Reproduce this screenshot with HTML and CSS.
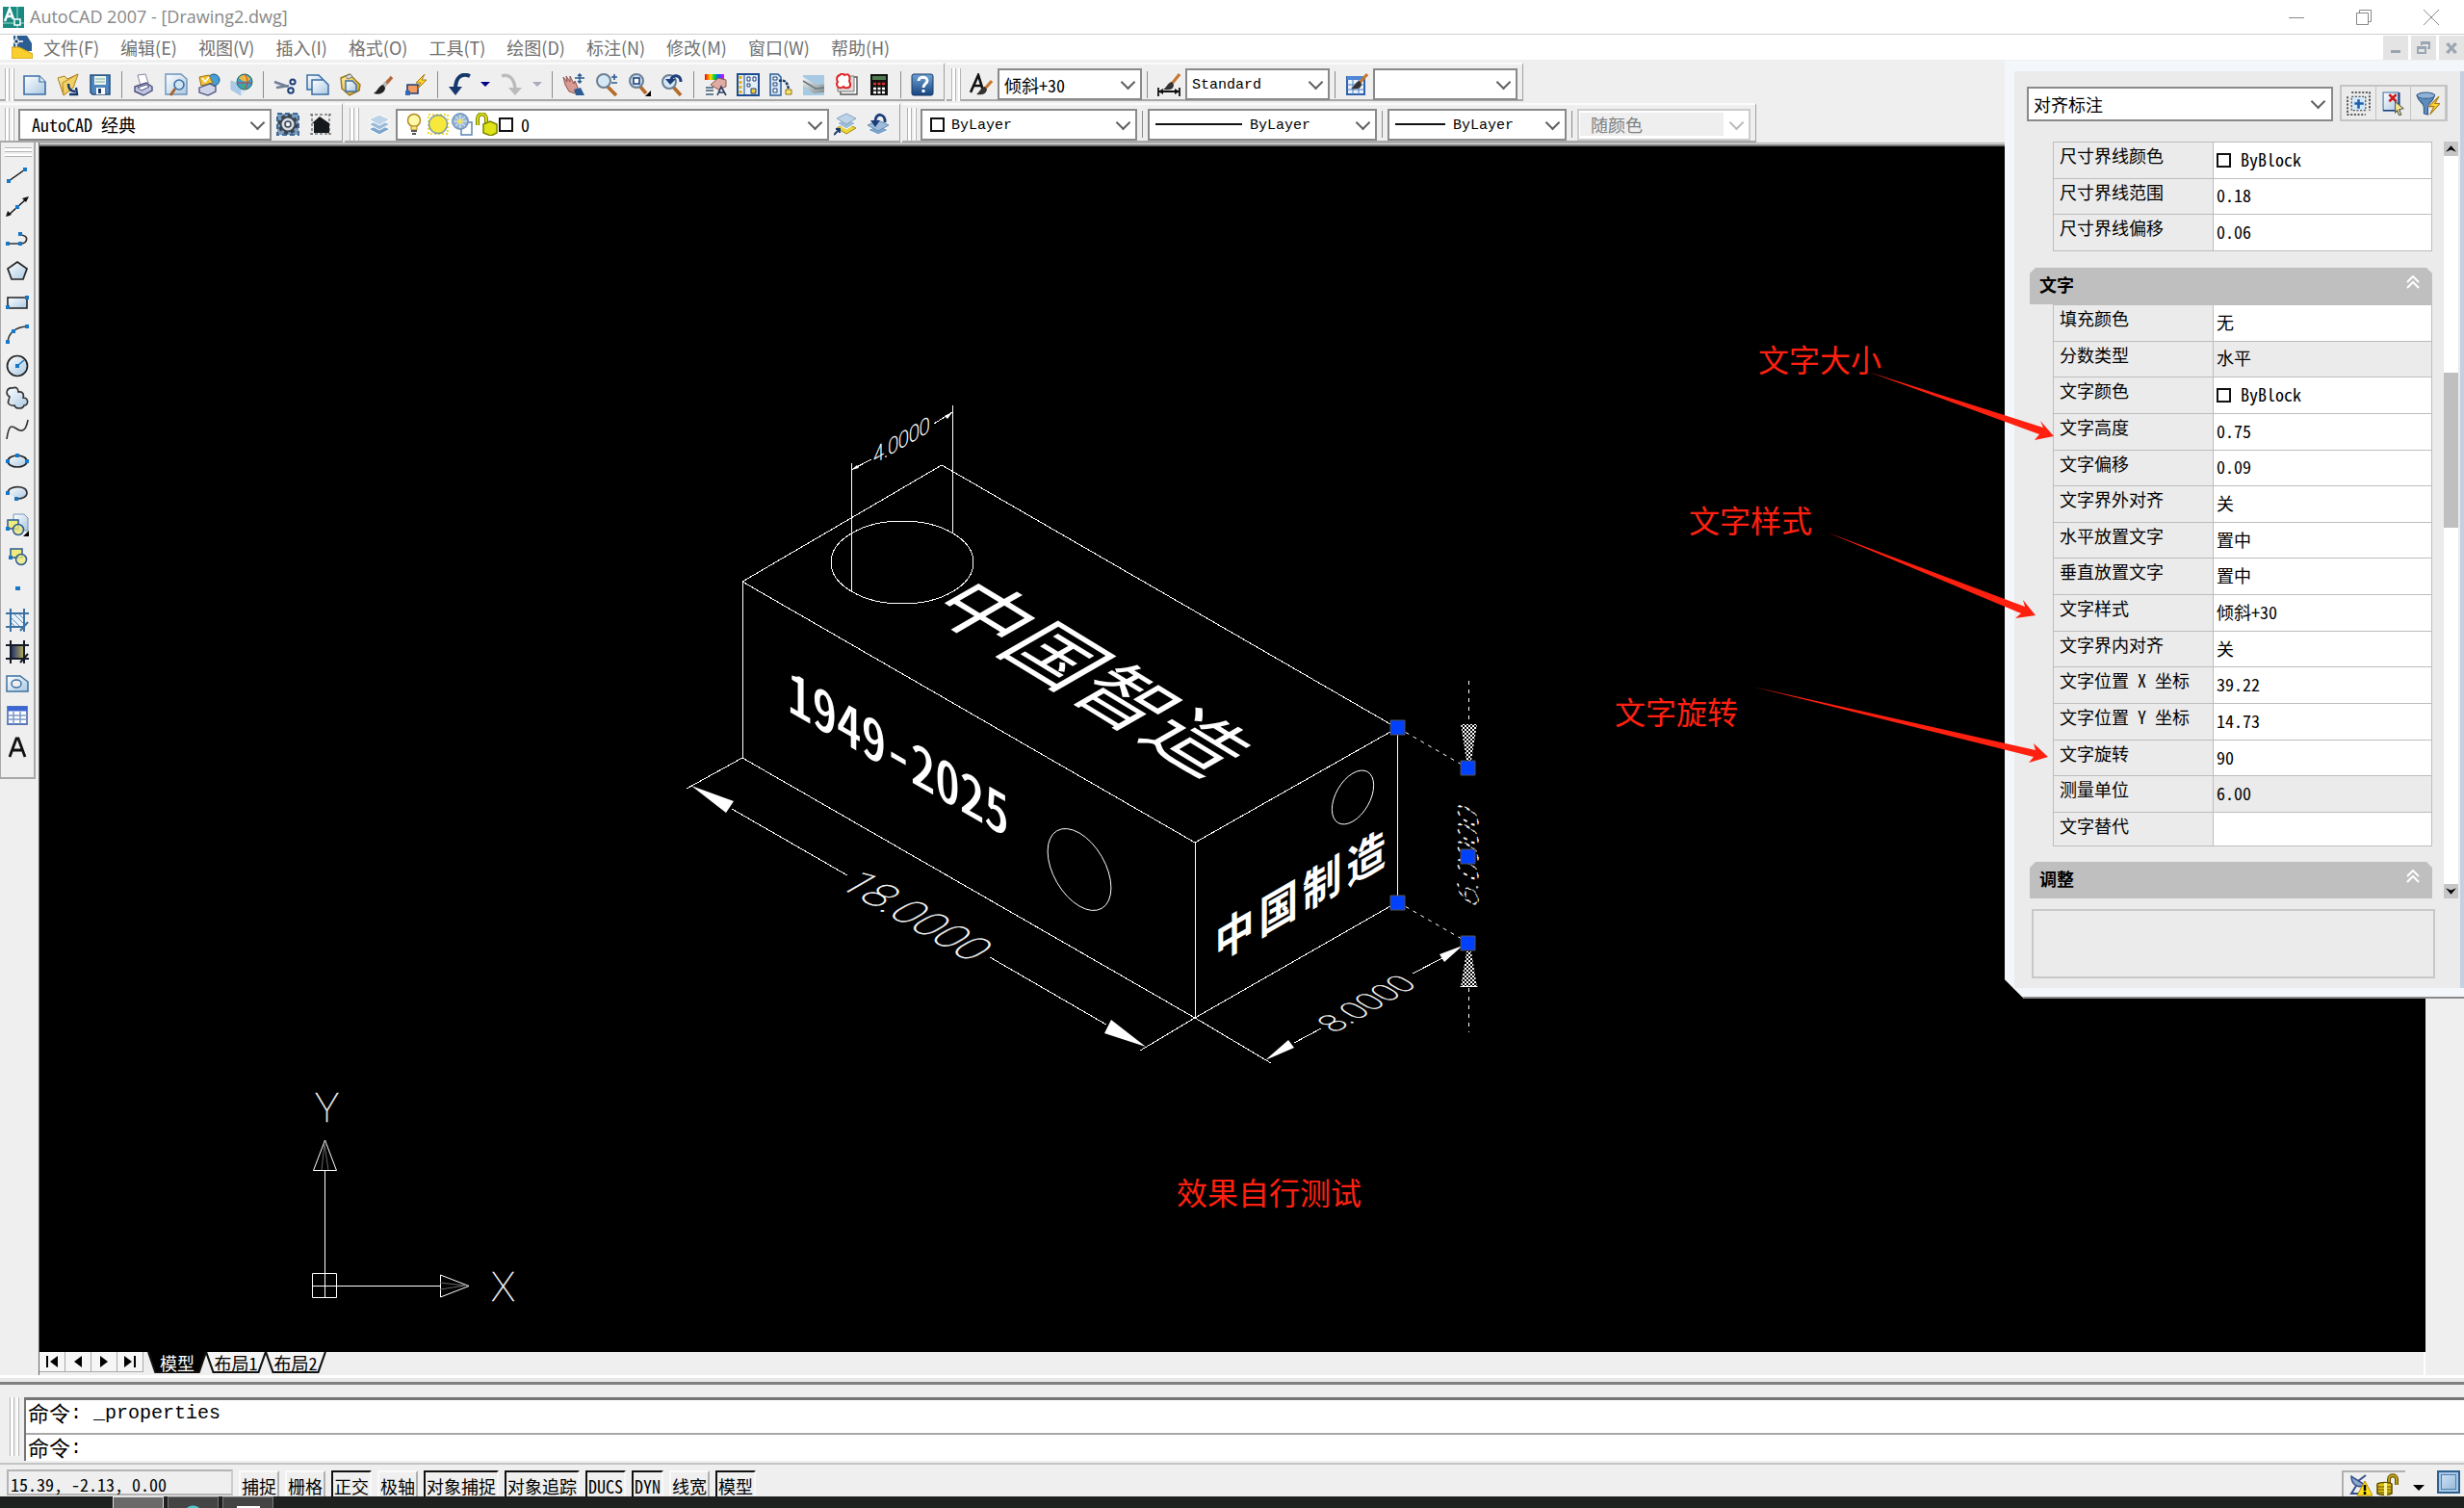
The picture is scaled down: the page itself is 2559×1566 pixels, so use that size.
FILE: index.html
```html
<!DOCTYPE html>
<html lang="zh-CN">
<head>
<meta charset="utf-8">
<title>AutoCAD 2007 - [Drawing2.dwg]</title>
<link rel="stylesheet" href="styles.css">
</head>
<body>
<svg class="defs" aria-hidden="true">
  <defs>
    <linearGradient id="paper" x1="0" y1="0" x2="1" y2="1"><stop offset="0" stop-color="#fff"/><stop offset="1" stop-color="#a9c8e2"/></linearGradient>
    <linearGradient id="gold" x1="0" y1="0" x2="1" y2="1"><stop offset="0" stop-color="#fdf3a8"/><stop offset="1" stop-color="#d09a1c"/></linearGradient>
    <linearGradient id="steel" x1="0" y1="0" x2="0" y2="1"><stop offset="0" stop-color="#6fa2d4"/><stop offset="1" stop-color="#17457f"/></linearGradient>
    <linearGradient id="rainbow"><stop offset="0" stop-color="#f00"/><stop offset=".3" stop-color="#fd0"/><stop offset=".5" stop-color="#0c3"/><stop offset=".7" stop-color="#06f"/><stop offset="1" stop-color="#e0f"/></linearGradient>
    <linearGradient id="dusk"><stop offset="0" stop-color="#1b2a66"/><stop offset="1" stop-color="#b9b060"/></linearGradient>
    <linearGradient id="pipe" x1="0" y1="0" x2="1" y2="1"><stop offset="0" stop-color="#f4f6f6"/><stop offset="1" stop-color="#7f8c90"/></linearGradient>
    <pattern id="mesh" width="4" height="4" patternUnits="userSpaceOnUse"><path d="M0 0L4 4M4 0L0 4" stroke="#fff" stroke-width="1"/></pattern>
  </defs>
  <symbol id="i-new" viewBox="0 0 24 24"><path d="M1 3h16l6 6v13H1z" fill="url(#paper)" stroke="#3a6ea5" stroke-width="1.6"/><path d="M17 3v6h6" fill="#dbe9f5" stroke="#3a6ea5" stroke-width="1.2"/></symbol>
  <symbol id="i-open" viewBox="0 0 24 24"><path d="M2 5l7-2 3 3 11-5-5 14-10 8z" fill="url(#gold)" stroke="#a87b1a"/><path d="M7 10l16-9-5 14-10 8z" fill="#f0d066" stroke="#b98c25"/><path d="M13 11c0 6 3 8 7 8M14 22l8 0-1-7" fill="none" stroke="#17386b" stroke-width="2.4"/></symbol>
  <symbol id="i-save" viewBox="0 0 24 24"><path d="M2 2h20v20H4l-2-2z" fill="#4d86bd" stroke="#24507f" stroke-width="1.5"/><path d="M6 3h12v9H6z" fill="#eaf5ee"/><path d="M7 6h10M7 9h10" stroke="#7fae9b"/><path d="M8 15h9v7H8z" fill="#fff"/><path d="M10 16h3v5h-3z" fill="#1a3a66"/></symbol>
  <symbol id="i-print" viewBox="0 0 24 24"><path d="M6 2l8-1 3 9-8 3z" fill="#fff" stroke="#8286a6"/><path d="M3 14l12-4 6 4v4l-9 5-9-4z" fill="#bfc4e0" stroke="#4b4f7c" stroke-width="1.4"/><path d="M6 15l9-3 3 2-8 4z" fill="#fff" stroke="#4b4f7c"/></symbol>
  <symbol id="i-preview" viewBox="0 0 24 24"><path d="M1 1h16l6 5v16H1z" fill="url(#paper)" stroke="#6d93bb" stroke-width="1.4"/><circle cx="15" cy="12" r="5" fill="#cde4f3" stroke="#3f6ea3" stroke-width="1.6"/><path d="M11 16l-5 7" stroke="#a8642c" stroke-width="3"/></symbol>
  <symbol id="i-publish" viewBox="0 0 24 24"><circle cx="17" cy="7" r="6" fill="#44a0d4" stroke="#19507f"/><path d="M2 4l10-2 4 8-12 3z" fill="#f3c331" stroke="#9b6f0d"/><path d="M5 5l3 4 4-5" stroke="#fff" stroke-width="1.5" fill="none"/><path d="M2 15l11-4 6 3v5l-8 4-9-3z" fill="#cfd3e8" stroke="#4b4f7c" stroke-width="1.3"/></symbol>
  <symbol id="i-web" viewBox="0 0 24 24"><path d="M1 8l10 4v11L1 17z" fill="#a9cbe9" stroke="#a9c2dd"/><path d="M11 12l9 3-9 8z" fill="#d5e6f5"/><circle cx="15" cy="9" r="8" fill="#3ba0cf" stroke="#2b6a55"/><path d="M9 5c4-4 8-4 12 1l-3 3-5-1z" fill="#f1b83a"/><path d="M8 10h14M15 1c4 5 4 11 0 16" stroke="#c8402a" fill="none"/><path d="M11 11l5 2-1 4z" fill="#49b04c"/></symbol>
  <symbol id="i-cut" viewBox="0 0 24 24"><path d="M1 9l14 5M3 15l13-2" stroke="#6f7f96" stroke-width="2.4"/><circle cx="20" cy="9" r="2.6" fill="none" stroke="#1d3f7b" stroke-width="2"/><circle cx="18" cy="18" r="2.8" fill="none" stroke="#1d3f7b" stroke-width="2"/></symbol>
  <symbol id="i-copy" viewBox="0 0 24 24"><path d="M1 2h12l4 4v11H1z" fill="url(#paper)" stroke="#3a6ea5" stroke-width="1.5"/><path d="M6 7h12l5 5v10H6z" fill="url(#paper)" stroke="#3a6ea5" stroke-width="1.5"/></symbol>
  <symbol id="i-paste" viewBox="0 0 24 24"><path d="M2 5l9-4 11 11-1 6-10 5-8-7z" fill="url(#gold)" stroke="#9c7419" stroke-width="1.4"/><path d="M7 8h7l4 4v7H7z" fill="url(#paper)" stroke="#3a6ea5" stroke-width="1.4"/><path d="M7 3l5-2 2 3-5 2z" fill="#ddd" stroke="#777"/></symbol>
  <symbol id="i-brush" viewBox="0 0 24 24"><path d="M21 4l-8 9" stroke="#b5683a" stroke-width="3.4"/><path d="M15 10l-3 4" stroke="#bbb" stroke-width="4"/><path d="M12 12c-5 1-5 6-10 9 7 2 12-1 12-6z" fill="#222"/></symbol>
  <symbol id="i-block" viewBox="0 0 24 24"><path d="M3 12h11v9H3z" fill="#f49a63" stroke="#1d3f7b" stroke-width="1.6"/><path d="M1 18h5v5H1z" fill="#2f6cb5"/><path d="M21 1l-9 9 5 0-4 7 10-10-5 0z" fill="#ffd52e" stroke="#a97a12"/></symbol>
  <symbol id="i-undo" viewBox="0 0 24 24"><path d="M23 3C14 -1 8 5 8 16" fill="none" stroke="#17386b" stroke-width="4"/><path d="M1 14l14 0-7 9z" fill="#17386b"/></symbol>
  <symbol id="i-redo" viewBox="0 0 24 24"><path d="M2 3c8-3 13 3 14 13" fill="none" stroke="#bbb" stroke-width="3.4"/><path d="M9 15h14l-7 8z" fill="#bbb"/></symbol>
  <symbol id="i-pan" viewBox="0 0 24 24"><path d="M1 4l4 5-1-6 4 6V3l4 8 1-3 3 7-3 6-6-2-4-7z" fill="#d99a92" stroke="#8b5550"/><path d="M12 17l7-2 4 8h-9z" fill="#2a5b93"/><path d="M18 1v9M13 5h10M16 3l2-2 2 2M16 8l2 2 2-2" stroke="#2a5b93" stroke-width="1.5" fill="none"/></symbol>
  <symbol id="i-zoom" viewBox="0 0 24 24"><path d="M13 14l9 9" stroke="#b56a28" stroke-width="3.6"/><circle cx="9" cy="8" r="7" fill="#d5e8f6" stroke="#6c7f92" stroke-width="2"/><path d="M17 4h6M20 1v6M17 10h6" stroke="#2a5b93" stroke-width="1.6"/></symbol>
  <symbol id="i-zoomwin" viewBox="0 0 24 24"><path d="M13 14l6 7" stroke="#b56a28" stroke-width="3.6"/><circle cx="9" cy="8" r="7" fill="#c5dcf0" stroke="#6c7f92" stroke-width="2"/><path d="M6 5h6v6H6z" fill="#fff" stroke="#1d3f7b" stroke-width="1.6"/><path d="M24 18v6h-6z" fill="#000"/></symbol>
  <symbol id="i-zoomprev" viewBox="0 0 24 24"><path d="M13 14l8 9" stroke="#b56a28" stroke-width="3.6"/><circle cx="9" cy="9" r="7" fill="#d5e8f6" stroke="#6c7f92" stroke-width="2"/><path d="M21 9c0-8-9-8-10-2" fill="none" stroke="#1d3f7b" stroke-width="3"/><path d="M5 6h11l-6 6z" fill="#1d3f7b"/></symbol>
  <symbol id="i-props" viewBox="0 0 24 24"><path d="M1 1h20v6H1z" fill="url(#rainbow)"/><path d="M7 12l8-7 8 2v7l-8 3z" fill="#e0aba0" stroke="#8b5550"/><path d="M2 15h8M2 18h8M2 22h8" stroke="#3d5b77" stroke-width="1.4"/><path d="M14 23l4-9 5 9M16 20h5" fill="none" stroke="#2d3d5e" stroke-width="1.6"/></symbol>
  <symbol id="i-dc" viewBox="0 0 24 24"><path d="M1 1h22v22H1z" fill="#e5effa" stroke="#1f4d8f" stroke-width="2"/><path d="M4 3v18" stroke="#e0b21c" stroke-width="3" stroke-dasharray="3 2"/><path d="M8 2v20" stroke="#1f4d8f"/><path d="M11 4h3v4h-3zM17 4h3v4h-3zM11 11h3v3h-3z" fill="#fff" stroke="#1f3f70"/><path d="M15 16h5v5h-5z" fill="#f3cf3b" stroke="#1f3f70"/></symbol>
  <symbol id="i-tp" viewBox="0 0 24 24"><path d="M1 1h8l3 3v19H1z" fill="#dbe8f6" stroke="#2d5f9a" stroke-width="1.5"/><path d="M4 4h4v3H4zM4 10h4v3H4zM4 16h4v4H4z" fill="#fff" stroke="#1f3f70"/><path d="M10 8c6-2 9 2 10 9" fill="none" stroke="#17386b" stroke-width="2.4" stroke-dasharray="3 1"/><path d="M17 17h6v5h-6z" fill="#fbe56a" stroke="#8d7315"/></symbol>
  <symbol id="i-sheet" viewBox="0 0 24 24"><path d="M1 2h22v21H1z" fill="#a7cae3"/><path d="M1 4l14 8 8-1v9l-11 1L1 13z" fill="url(#pipe)"/><path d="M1 8l13 8 9-1" stroke="#6a7579" fill="none" stroke-width="1.5"/></symbol>
  <symbol id="i-markup" viewBox="0 0 24 24"><path d="M6 4h17v18H6z" fill="#fff" stroke="#555" stroke-width="1.4"/><path d="M3 3h17v16H3z" fill="#ddd" stroke="#777"/><path d="M5 2c3-3 5 0 5 0s4-2 5 1 0 5 0 5 3 6-1 7-5-1-5-1-4 3-6 0 0-5 0-5-3-5 2-7z" fill="#fff" stroke="#e02525" stroke-width="2"/></symbol>
  <symbol id="i-calc" viewBox="0 0 24 24"><path d="M3 1h18v22H3z" fill="#111"/><path d="M5 3h14v4H5z" fill="#4d7a4d"/><path d="M6 11h12" stroke="#e03030" stroke-width="2.4" stroke-dasharray="3 1.5"/><path d="M6 16h12M6 20h12" stroke="#fff" stroke-width="2.4" stroke-dasharray="3 1.5"/></symbol>
  <symbol id="i-help" viewBox="0 0 24 24"><rect x="1" y="1" width="22" height="22" rx="2" fill="url(#steel)" stroke="#17386b"/><path d="M8 8c0-5 9-5 9 0 0 3-4 3-4 7" fill="none" stroke="#fff" stroke-width="3"/><path d="M11.500 17h3v3h-3z" fill="#fff"/></symbol>
  <symbol id="i-tstyle" viewBox="0 0 24 24"><path d="M1 20L9 2l5 16M4 13h8" fill="none" stroke="#111" stroke-width="2.600"/><path d="M23 8l-7 8" stroke="#c8752e" stroke-width="3"/><path d="M16 14c-4 0-5 5-9 8 5 1 10 0 11-5z" fill="#333"/></symbol>
  <symbol id="i-dstyle" viewBox="0 0 24 24"><path d="M23 1l-8 10" stroke="#c8752e" stroke-width="3"/><path d="M15 9c-5 1-5 6-9 8 6 1 11 0 11-5z" fill="#333"/><path d="M1 15v9M23 15v9M1 19h22" stroke="#111" stroke-width="1.800"/><path d="M1 19l5-3v6zM23 19l-5-3v6z" fill="#111"/></symbol>
  <symbol id="i-tabstyle" viewBox="0 0 24 24"><path d="M2 4h18v18H2z" fill="#e9f1fb" stroke="#2f62ac" stroke-width="2"/><path d="M2 5h18" stroke="#4f86d6" stroke-width="4"/><path d="M8 7v15M14 7v15M2 12h18M2 17h18" stroke="#4f7fc0"/><path d="M23 1l-8 9" stroke="#c8752e" stroke-width="3"/><path d="M15 8c-5 1-5 6-9 8 6 1 11 0 11-5z" fill="#333"/></symbol>
  <symbol id="i-gear" viewBox="0 0 24 24"><path d="M1 1h22v22H1z" fill="#7d9dbd" stroke="#3b6a9a" stroke-width="2" stroke-dasharray="5 3"/><circle cx="12" cy="12" r="9" fill="none" stroke="#3a4350" stroke-width="3" stroke-dasharray="4 3"/><circle cx="12" cy="12" r="7.500" fill="#d7dde4" stroke="#3a4350" stroke-width="2"/><circle cx="12" cy="12" r="3" fill="#f0f4f8" stroke="#3a4350" stroke-width="1.500"/></symbol>
  <symbol id="i-home" viewBox="0 0 24 24"><path d="M1 2h22M1 22h22M3 1v22M21 1v22" stroke="#777" stroke-width="1.500" stroke-dasharray="3 2"/><path d="M3 11l8-7 10 7v10H5V11z" fill="#15181d"/></symbol>
  <symbol id="i-layers" viewBox="0 0 24 24"><path d="M1 17l11-5 11 5-11 6z" fill="#7fa6cc" stroke="#fff"/><path d="M1 12l11-5 11 5-11 6z" fill="#9dbcd9" stroke="#fff"/><path d="M1 7l11-5 11 5-11 6z" fill="#bcd3e8" stroke="#fff"/></symbol>
  <symbol id="i-laymatch" viewBox="0 0 24 24"><path d="M3 16l10-5 10 5-10 6z" fill="#ecd43b" stroke="#a48c12"/><path d="M3 11l10-5 10 5-10 6z" fill="#9dbcd9" stroke="#fff"/><path d="M3 6l10-5 10 5-10 6z" fill="#bcd3e8" stroke="#88a5c2"/><path d="M0 23l5-5M2 17h4v4" stroke="#17386b" stroke-width="1.800" fill="none"/></symbol>
  <symbol id="i-layprev" viewBox="0 0 24 24"><path d="M1 18l11-5 11 5-11 5z" fill="#7fa6cc" stroke="#fff"/><path d="M1 13l11-5 11 5-11 6z" fill="#9dbcd9" stroke="#6a8fb4"/><path d="M19 10c1-9-10-11-10-1" fill="none" stroke="#1d3f7b" stroke-width="3"/><path d="M4 8h10l-5 7z" fill="#1d3f7b"/></symbol>
  <symbol id="i-bulb" viewBox="0 0 24 24"><circle cx="12" cy="8" r="6.500" fill="#fff9a8" stroke="#b28a1e" stroke-width="1.500"/><path d="M9 14h6v4H9z" fill="#f6e37a" stroke="#b28a1e"/><path d="M9 19h6M10 22h4" stroke="#555" stroke-width="2"/></symbol>
  <symbol id="i-sun" viewBox="0 0 24 24"><path d="M2 2h20v20H2z" fill="none" stroke="#f0dc28" stroke-width="2" stroke-dasharray="2 2"/><circle cx="12" cy="12" r="9.500" fill="#f7e93c" stroke="#7c98a8" stroke-width="1.500"/></symbol>
  <symbol id="i-freeze" viewBox="0 0 24 24"><path d="M11 10h11v13H11z" fill="#fff" stroke="#5b86b5" stroke-width="1.500"/><circle cx="10" cy="9" r="8" fill="#9ab9d6" stroke="#7b9cbf" stroke-width="2"/><path d="M10 2v14M3 9h14M5 4l10 10M15 4L5 14" stroke="#e8eff6"/><circle cx="10" cy="9" r="2.500" fill="#f3e25a"/></symbol>
  <symbol id="i-unlock" viewBox="0 0 24 24"><path d="M3 13V6c0-6 9-6 9 0v6" fill="none" stroke="#7c8200" stroke-width="4"/><path d="M3 13V6c0-6 9-6 9 0v6" fill="none" stroke="#d8e014" stroke-width="2"/><path d="M9 12l7-3 7 3v9l-6 3-8-3z" fill="#dfe317" stroke="#7c8200" stroke-width="1.500"/></symbol>
  <symbol id="i-line" viewBox="0 0 24 24"><path d="M3 18L20 6" stroke="#111" stroke-width="1.500"/><path d="M1 16h4v4H1zM18 4h4v4h-4z" fill="#1577c6"/></symbol>
  <symbol id="i-xline" viewBox="0 0 24 24"><path d="M2 21L22 3" stroke="#111" stroke-width="1.500"/><path d="M0 22l2-6 4 4zM24 1l-7 2 4 4z" fill="#111"/><path d="M10 10h4v4h-4z" fill="#1577c6"/></symbol>
  <symbol id="i-pline" viewBox="0 0 24 24"><path d="M2 17h14c7-1 8-8 0-9" fill="none" stroke="#333" stroke-width="1.700"/><path d="M0 15h4v4H0zM13 15h4v4h-4zM13 5h4v4h-4z" fill="#1577c6"/></symbol>
  <symbol id="i-poly" viewBox="0 0 24 24"><path d="M12 3l10 7-4 11H6L2 10z" fill="url(#paper)" stroke="#222" stroke-width="1.700"/></symbol>
  <symbol id="i-rect" viewBox="0 0 24 24"><path d="M2 7h20v11H2z" fill="url(#paper)" stroke="#222" stroke-width="1.600"/><path d="M0 15h4v4H0zM20 5h4v4h-4z" fill="#1577c6"/></symbol>
  <symbol id="i-arc" viewBox="0 0 24 24"><path d="M2 20C3 11 9 5 22 4" fill="none" stroke="#333" stroke-width="1.600"/><path d="M0 18h4v4H0zM6 7h4v4H6zM20 2h4v4h-4z" fill="#1577c6"/></symbol>
  <symbol id="i-circle" viewBox="0 0 24 24"><circle cx="12" cy="12" r="10.500" fill="url(#paper)" stroke="#222" stroke-width="1.700"/><path d="M12 12l7-6" stroke="#1577c6" stroke-width="1.500"/><path d="M10 10h4v4h-4z" fill="#1577c6"/></symbol>
  <symbol id="i-cloud" viewBox="0 0 24 24"><path d="M4 11c-5-3-3-10 3-9 4-2 6 1 6 4 5-1 6 3 5 6 6 0 6 8 1 8-1 4-9 4-10 0-4 1-8-2-6-5 0-2 1-3 1-4z" fill="url(#paper)" stroke="#333" stroke-width="1.600"/></symbol>
  <symbol id="i-spline" viewBox="0 0 24 24"><path d="M1 22C4 0 9 12 15 13c5 1 7-5 8-11" fill="none" stroke="#333" stroke-width="1.600"/></symbol>
  <symbol id="i-ellipse" viewBox="0 0 24 24"><ellipse cx="12" cy="12" rx="10" ry="6" fill="url(#paper)" stroke="#222" stroke-width="1.700"/><path d="M0 10h4v4H0zM20 10h4v4h-4zM10 4h4v4h-4z" fill="#1577c6"/></symbol>
  <symbol id="i-earc" viewBox="0 0 24 24"><path d="M2 12c0-8 20-9 20 0 0 4-5 6-10 6" fill="url(#paper)" stroke="#333" stroke-width="1.700"/><path d="M0 10h4v4H0zM9 16h4v4H9z" fill="#1577c6"/></symbol>
  <symbol id="i-insert" viewBox="0 0 24 24"><path d="M8 1h11l4 4v13H8z" fill="url(#paper)" stroke="#7795b5"/><path d="M2 7h11v9H2z" fill="#f0eb7d" stroke="#2a5b93" stroke-width="1.500"/><circle cx="13" cy="17" r="5.500" fill="#f0eb7d" fill-opacity=".8" stroke="#2a5b93" stroke-width="1.500"/><path d="M0 14h4v4H0z" fill="#1577c6"/><path d="M24 18v6h-6z" fill="#000"/></symbol>
  <symbol id="i-mkblock" viewBox="0 0 24 24"><path d="M5 4h12v9H5z" fill="#f0eb7d" stroke="#2a5b93" stroke-width="1.500"/><circle cx="16" cy="15" r="5.500" fill="#f0eb7d" fill-opacity=".8" stroke="#2a5b93" stroke-width="1.500"/><path d="M3 11h4v4H3z" fill="#1577c6"/></symbol>
  <symbol id="i-point" viewBox="0 0 24 24"><path d="M10 10h5v4h-5z" fill="#1577c6"/></symbol>
  <symbol id="i-hatch" viewBox="0 0 24 24"><path d="M5 5h14v14H5z" fill="#e8f1f9"/><path d="M5 9l10 10M5 14l5 5M8 5l11 11M13 5l6 6" stroke="#5e8cb8"/><path d="M0 5h24M0 19h20M5 0v24M19 0v24M15 23l8-9" stroke="#3c71a3" stroke-width="2" fill="none"/></symbol>
  <symbol id="i-grad" viewBox="0 0 24 24"><path d="M5 5h14v14H5z" fill="url(#dusk)"/><path d="M0 5h24M0 19h24M5 0v24M19 0v24M15 23l8-9" stroke="#151a26" stroke-width="2" fill="none"/></symbol>
  <symbol id="i-region" viewBox="0 0 24 24"><path d="M1 4h14l8 6v10H1z" fill="url(#paper)" stroke="#3c71a3" stroke-width="1.500"/><ellipse cx="11" cy="12" rx="5" ry="4" fill="#efefef" stroke="#3c71a3" stroke-width="1.500"/></symbol>
  <symbol id="i-table" viewBox="0 0 24 24"><path d="M2 3h20v18H2z" fill="#fff" stroke="#5877b8" stroke-width="1.800"/><path d="M2 5h20" stroke="#3c66d4" stroke-width="5"/><path d="M8 8v13M15 8v13M2 12h20M2 16h20" stroke="#7d99c8" stroke-width="1.500"/></symbol>
  <symbol id="i-mtext" viewBox="0 0 24 24"><path d="M4 22L11 3h2l7 19M7 15h10" fill="none" stroke="#111" stroke-width="2.800"/></symbol>
</svg>

<header class="titlebar">
  <svg class="logo" viewBox="0 0 22 22"><path d="M0 0h22v22H0z" fill="#1a8a80"/><path d="M2 15L7 2l4 11M4 10h6" fill="none" stroke="#fff" stroke-width="2.500"/><path d="M15 0v22M0 17h22" stroke="#9fe0d4"/><path d="M12 13h6v6h-6z" fill="#1a8a80" stroke="#fff" stroke-width="1.500"/></svg>
  <h1>AutoCAD 2007 - [Drawing2.dwg]</h1>
  <div class="winctl">
    <button aria-label="最小化"><svg viewBox="0 0 16 16"><path d="M0 8.500h16"/></svg></button>
    <button aria-label="还原"><svg viewBox="0 0 16 16"><path d="M.5 3.500h12v12h-12zM3.500 3V.5h12v12H13"/></svg></button>
    <button aria-label="关闭"><svg viewBox="0 0 16 16"><path d="M0 0l16 16M16 0L0 16"/></svg></button>
  </div>
</header>

<nav class="menubar">
  <svg class="docicon" viewBox="0 0 22 24"><path d="M2 0h14l5 8v8H2z" fill="#2b5d92"/><path d="M5 0v12M0 6h12" stroke="#fff" stroke-width="1.500"/><path d="M3 4h4v4H3z" fill="#17386b" stroke="#fff"/><path d="M0 12l8 0 14 7v5H0z" fill="#f8cf2e" stroke="#c79a12"/></svg>
  <a href="#">文件(F)</a><a href="#">编辑(E)</a><a href="#">视图(V)</a><a href="#">插入(I)</a><a href="#">格式(O)</a><a href="#">工具(T)</a><a href="#">绘图(D)</a><a href="#">标注(N)</a><a href="#">修改(M)</a><a href="#">窗口(W)</a><a href="#">帮助(H)</a>
  <div class="docctl">
    <button aria-label="最小化图形"><svg viewBox="0 0 14 14"><path d="M2 9h10v3H2z"/></svg></button>
    <button aria-label="还原图形"><svg viewBox="0 0 14 14"><path d="M4 0h10v8h-3V6h1V3H6v1H4zM0 5h10v8H0zm2 3v3h6V8z" fill-rule="evenodd"/></svg></button>
    <button aria-label="关闭图形"><svg viewBox="0 0 14 14"><path d="M1 3l3-2 3 4 3-4 3 2-4 4 4 4-3 2-3-4-3 4-3-2 4-4z"/></svg></button>
  </div>
</nav>

<div class="dock">
  <div class="dockrow">
    <div class="bar">
      <i class="grip"></i>
      <button aria-label="新建"><svg><use href="#i-new"/></svg></button>
      <button aria-label="打开"><svg><use href="#i-open"/></svg></button>
      <button aria-label="保存"><svg><use href="#i-save"/></svg></button>
      <i class="sep"></i>
      <button aria-label="打印"><svg><use href="#i-print"/></svg></button>
      <button aria-label="打印预览"><svg><use href="#i-preview"/></svg></button>
      <button aria-label="发布"><svg><use href="#i-publish"/></svg></button>
      <button aria-label="三维 DWF"><svg><use href="#i-web"/></svg></button>
      <i class="sep"></i>
      <button aria-label="剪切"><svg><use href="#i-cut"/></svg></button>
      <button aria-label="复制"><svg><use href="#i-copy"/></svg></button>
      <button aria-label="粘贴"><svg><use href="#i-paste"/></svg></button>
      <button aria-label="特性匹配"><svg><use href="#i-brush"/></svg></button>
      <button aria-label="块编辑器"><svg><use href="#i-block"/></svg></button>
      <i class="sep"></i>
      <button aria-label="放弃"><svg><use href="#i-undo"/></svg></button>
      <button class="drop" aria-label="放弃列表"></button>
      <button aria-label="重做"><svg><use href="#i-redo"/></svg></button>
      <button class="drop off" aria-label="重做列表"></button>
      <i class="sep"></i>
      <button aria-label="平移"><svg><use href="#i-pan"/></svg></button>
      <button aria-label="实时缩放"><svg><use href="#i-zoom"/></svg></button>
      <button aria-label="窗口缩放"><svg><use href="#i-zoomwin"/></svg></button>
      <button aria-label="缩放上一个"><svg><use href="#i-zoomprev"/></svg></button>
      <i class="sep"></i>
      <button aria-label="特性"><svg><use href="#i-props"/></svg></button>
      <button aria-label="设计中心"><svg><use href="#i-dc"/></svg></button>
      <button aria-label="工具选项板"><svg><use href="#i-tp"/></svg></button>
      <button aria-label="图纸集管理器"><svg><use href="#i-sheet"/></svg></button>
      <button aria-label="标记集管理器"><svg><use href="#i-markup"/></svg></button>
      <button aria-label="快速计算器"><svg><use href="#i-calc"/></svg></button>
      <i class="sep"></i>
      <button aria-label="帮助"><svg><use href="#i-help"/></svg></button>
    </div>
    <div class="bar">
      <i class="grip"></i>
      <button aria-label="文字样式"><svg><use href="#i-tstyle"/></svg></button>
      <div class="combo w150"><select aria-label="文字样式控制"><option>倾斜+30</option></select></div>
      <i class="sep"></i>
      <button aria-label="标注样式"><svg><use href="#i-dstyle"/></svg></button>
      <div class="combo w150 mono"><select aria-label="标注样式控制"><option>Standard</option></select></div>
      <i class="sep"></i>
      <button aria-label="表格样式"><svg><use href="#i-tabstyle"/></svg></button>
      <div class="combo w150"><select aria-label="表格样式控制"><option></option></select></div>
    </div>
  </div>
  <div class="dockrow">
    <div class="bar">
      <i class="grip"></i>
      <div class="combo w263"><select aria-label="工作空间"><option>AutoCAD 经典</option></select></div>
      <button aria-label="工作空间设置"><svg><use href="#i-gear"/></svg></button>
      <button aria-label="我的工作空间"><svg><use href="#i-home"/></svg></button>
    </div>
    <div class="bar">
      <i class="grip"></i>
      <button aria-label="图层特性管理器"><svg><use href="#i-layers"/></svg></button>
      <div class="combo w450 layer">
        <svg><use href="#i-bulb"/></svg><svg><use href="#i-sun"/></svg><svg><use href="#i-freeze"/></svg><svg><use href="#i-unlock"/></svg><i class="swatch"></i>
        <select aria-label="图层"><option>0</option></select>
      </div>
      <button aria-label="将对象的图层置为当前"><svg><use href="#i-laymatch"/></svg></button>
      <button aria-label="上一个图层"><svg><use href="#i-layprev"/></svg></button>
    </div>
    <div class="bar">
      <i class="grip"></i>
      <div class="combo w225 mono"><i class="swatch"></i><select aria-label="颜色"><option>ByLayer</option></select></div>
      <i class="sep"></i>
      <div class="combo w238 mono"><i class="rule long"></i><select aria-label="线型"><option>ByLayer</option></select></div>
      <i class="sep"></i>
      <div class="combo w186 mono"><i class="rule"></i><select aria-label="线宽"><option>ByLayer</option></select></div>
      <i class="sep"></i>
      <div class="combo w180 disabled"><select aria-label="打印样式" disabled><option>随颜色</option></select></div>
    </div>
  </div>
</div>

<main class="work">
  <aside class="drawdock">
    <div class="drawbar">
      <i class="hgrip"></i>
      <button aria-label="直线"><svg><use href="#i-line"/></svg></button>
      <button aria-label="构造线"><svg><use href="#i-xline"/></svg></button>
      <button aria-label="多段线"><svg><use href="#i-pline"/></svg></button>
      <button aria-label="正多边形"><svg><use href="#i-poly"/></svg></button>
      <button aria-label="矩形"><svg><use href="#i-rect"/></svg></button>
      <button aria-label="圆弧"><svg><use href="#i-arc"/></svg></button>
      <button aria-label="圆"><svg><use href="#i-circle"/></svg></button>
      <button aria-label="修订云线"><svg><use href="#i-cloud"/></svg></button>
      <button aria-label="样条曲线"><svg><use href="#i-spline"/></svg></button>
      <button aria-label="椭圆"><svg><use href="#i-ellipse"/></svg></button>
      <button aria-label="椭圆弧"><svg><use href="#i-earc"/></svg></button>
      <button aria-label="插入块"><svg><use href="#i-insert"/></svg></button>
      <button aria-label="创建块"><svg><use href="#i-mkblock"/></svg></button>
      <button aria-label="点"><svg><use href="#i-point"/></svg></button>
      <button aria-label="图案填充"><svg><use href="#i-hatch"/></svg></button>
      <button aria-label="渐变色"><svg><use href="#i-grad"/></svg></button>
      <button aria-label="面域"><svg><use href="#i-region"/></svg></button>
      <button aria-label="表格"><svg><use href="#i-table"/></svg></button>
      <button aria-label="多行文字"><svg><use href="#i-mtext"/></svg></button>
    </div>
  </aside>
  <section class="view">
    <div class="model">
      <svg class="drawing" role="img" aria-label="等轴测图">
        <g transform="translate(-41 -152)" fill="none" stroke="#fff">
          <g class="edges">
            <path d="M771 604L978 483L1451 756L1241 875zM771 604V787L1241 1057V875M1451 756V937L1241 1057"/>
            <ellipse cx="937" cy="584" rx="74" ry="43"/>
            <circle r="38" vector-effect="non-scaling-stroke" transform="matrix(.866 .5 0 1 1121 903)"/>
            <circle r="25" vector-effect="non-scaling-stroke" transform="matrix(.866 -.5 0 1 1405 828)"/>
            <path d="M884.500 481V614M989.500 421V554M884 488L905 477M970 440L989 428"/>
            <path d="M771 787L713 819M1241 1057L1184 1091M760 840L880 909M1028 994L1149 1064"/>
            <path d="M1241 1057L1320 1104M1344 1083L1372 1068M1467 1011L1498 995"/>
          </g>
          <g fill="#fff" stroke="none">
            <path d="M718 816L762 832L754 844zM1190 1087L1154 1059L1147 1073zM1314 1101L1338 1080L1344 1088zM1519 982L1495 991L1500 999z"/>
            <path d="M884 488l6-5 2 3zM989 428l-8 4 3 3z"/>
          </g>
          <g class="dashed">
            <path d="M1452 756L1525 798M1452 937L1525 979M1525.500 707V752M1525.500 1026V1072"/>
            <text class="dim" font-size="34" transform="matrix(0 -1 .866 .5 1535 944)">6.0000</text>
          </g>
          <path d="M1517 752h17l-6 38h-5zM1523 988h5l6 37h-17z" fill="url(#mesh)" stroke="none"/>
          <path d="M1516.500 1024.500h18"/>
          <g class="dim solid">
            <text font-size="23" transform="matrix(.866 -.5 0 1 907 482)">4.0000</text>
            <text font-size="46" transform="matrix(.866 .5 -.866 .5 868 919)">18.0000</text>
            <text font-size="34" transform="matrix(.866 -.5 .866 .5 1386 1073)">8.0000</text>
          </g>
          <g class="lettering">
            <text font-size="86" transform="matrix(.852 .52 -.866 .5 960 630)">中国智造</text>
            <text class="half" font-size="59" transform="matrix(.866 .5 0 1 818 738)">1949-2025</text>
            <text class="heavy" font-size="47" x="2 55 107 160" transform="matrix(.866 -.5 0 1 1260 1000)">中国制造</text>
          </g>
          <g class="grips">
            <path d="M1444 748h15v15h-15zM1517 790h15v15h-15zM1517 882h15v15h-15zM1444 930h15v15h-15zM1517 972h15v15h-15z"/>
          </g>
          <g class="ucs">
            <path d="M324.500 1322.500h25v25h-25zM337.500 1347V1215M325 1335.500H457M325.500 1215.500h24L337.500 1184zM457.500 1324v23L487 1335.500z"/>
            <path d="M334 1215l3-27 4 27M457 1332l26 3-26 4" stroke="#666"/>
            <text x="327" y="1165">Y</text><text x="510" y="1351">X</text>
          </g>
        </g>
      </svg>
    </div>
    <div class="tabs">
      <div class="tabnav">
        <button aria-label="第一个"><svg viewBox="0 0 14 14"><path d="M1 1h2v12H1zM13 1v12L5 7z"/></svg></button>
        <button aria-label="上一个"><svg viewBox="0 0 14 14"><path d="M11 1v12L3 7z"/></svg></button>
        <button aria-label="下一个"><svg viewBox="0 0 14 14"><path d="M3 1v12l8-6z"/></svg></button>
        <button aria-label="最后一个"><svg viewBox="0 0 14 14"><path d="M1 1v12l8-6zM11 1h2v12h-2z"/></svg></button>
      </div>
      <button class="tab current"><svg viewBox="0 0 60 22" preserveAspectRatio="none"><path d="M1 0l7 21h44l7-21"/></svg><span>模型</span></button>
      <button class="tab"><svg viewBox="0 0 60 22" preserveAspectRatio="none"><path d="M1 0l7 21h44l7-21"/></svg><span>布局1</span></button>
      <button class="tab"><svg viewBox="0 0 60 22" preserveAspectRatio="none"><path d="M1 0l7 21h44l7-21"/></svg><span>布局2</span></button>
    </div>
  </section>
</main>

<section class="command">
  <i class="grip"></i>
  <div class="console">
    <p><span>命令</span>: _properties</p>
    <label><span>命令</span>:<input type="text" aria-label="命令行"></label>
  </div>
</section>

<footer class="status">
  <output class="coords">15.39, -2.13, 0.00</output>
  <div class="toggles">
    <button>捕捉</button><button>栅格</button><button class="on">正交</button><button>极轴</button><button class="on">对象捕捉</button><button class="on">对象追踪</button><button class="on">DUCS</button><button class="on">DYN</button><button>线宽</button><button class="on">模型</button>
  </div>
  <div class="tray">
    <svg viewBox="0 0 24 24"><path d="M2 3c0 9 7 13 14 9z" fill="#8fa5d0" stroke="#33508d" stroke-width="1.500"/><path d="M9 8l8-6M7 13l-5 8h9" stroke="#33508d" stroke-width="2" fill="none"/><path d="M16 8l8 15H8z" fill="#ffe11a" stroke="#b78a00"/><path d="M16 12v6M16 19v3" stroke="#000" stroke-width="2.500"/></svg>
    <svg viewBox="0 0 24 24"><path d="M13 11V6c0-5 8-5 8 0v6" fill="none" stroke="#6b5700" stroke-width="4"/><path d="M13 11V6c0-5 8-5 8 0v6" fill="none" stroke="#d0b020" stroke-width="1.500"/><path d="M1 11c3-2 12-2 15 0v10c-3 2-12 2-15 0z" fill="#e4c513" stroke="#5b4a00" stroke-width="1.500"/><path d="M1 14h15M1 17h15M1 20h15" stroke="#5b4a00"/><path d="M8 10h3v13H8z" fill="#fff59a"/></svg>
  </div>
  <button class="drop" aria-label="状态栏菜单"></button>
  <button class="clean" aria-label="全屏显示"></button>
</footer>

<div class="taskbar">
  <i class="task active"></i><i class="task"></i><i class="task"></i>
</div>

<section class="palette" aria-label="特性">
  <div class="palhead">
    <div class="combo"><select aria-label="选择对象"><option>对齐标注</option></select></div>
    <div class="palbtns">
      <button aria-label="切换 PICKADD"><svg viewBox="0 0 24 24"><path d="M5 1h18v18M1 5v18h18" fill="none" stroke="#333" stroke-width="1.500" stroke-dasharray="2 1.500"/><path d="M5 5h14v14H5z" fill="#d4e8f8" stroke="#333" stroke-dasharray="2 1.500"/><path d="M12 8v9M8 12h9" stroke="#1d5fae" stroke-width="2.500"/></svg></button>
      <button aria-label="选择对象"><svg viewBox="0 0 24 24"><path d="M2 1h15v18H2z" fill="url(#paper)" stroke="#3a6ea5"/><path d="M2 19h16V1" fill="none" stroke="#1d3f7b" stroke-width="1.500"/><path d="M8 3l7 7M15 3l-7 7" stroke="#d01818" stroke-width="2.500"/><path d="M14 10l8 7-4 1 2 5-2 1-2-5-2 2z" fill="#f3e68a" stroke="#555"/></svg></button>
      <button aria-label="快速选择"><svg viewBox="0 0 24 24"><path d="M1 4c2 8 7 6 7 12v6l4 1v-7c0-6 6-5 6-12z" fill="#5d8bbb" stroke="#2b5687"/><ellipse cx="10" cy="4" rx="9" ry="3" fill="#8fb2d4" stroke="#2b5687"/><path d="M23 5l-10 10h5l-4 8 10-11h-5z" fill="#ffd52e" stroke="#a97a12"/></svg></button>
    </div>
  </div>
  <div class="palbody">
    <div class="groups">
      <table class="props first">
        <tr><th scope="row">尺寸界线颜色</th><td><i class="swatch"></i>ByBlock</td></tr>
        <tr><th scope="row">尺寸界线范围</th><td>0.18</td></tr>
        <tr><th scope="row">尺寸界线偏移</th><td>0.06</td></tr>
      </table>
      <h2>文字<svg viewBox="0 0 14 14"><path d="M1 7l6-6 6 6M1 13l6-6 6 6"/></svg></h2>
      <table class="props second">
        <tr><th scope="row">填充颜色</th><td>无</td></tr>
        <tr><th scope="row">分数类型</th><td class="ro">水平</td></tr>
        <tr><th scope="row">文字颜色</th><td><i class="swatch"></i>ByBlock</td></tr>
        <tr><th scope="row">文字高度</th><td>0.75</td></tr>
        <tr><th scope="row">文字偏移</th><td>0.09</td></tr>
        <tr><th scope="row">文字界外对齐</th><td>关</td></tr>
        <tr><th scope="row">水平放置文字</th><td>置中</td></tr>
        <tr><th scope="row">垂直放置文字</th><td>置中</td></tr>
        <tr><th scope="row">文字样式</th><td>倾斜+30</td></tr>
        <tr><th scope="row">文字界内对齐</th><td>关</td></tr>
        <tr><th scope="row">文字位置 X 坐标</th><td>39.22</td></tr>
        <tr><th scope="row">文字位置 Y 坐标</th><td>14.73</td></tr>
        <tr><th scope="row">文字旋转</th><td>90</td></tr>
        <tr><th scope="row">测量单位</th><td class="ro">6.00</td></tr>
        <tr><th scope="row">文字替代</th><td></td></tr>
      </table>
      <h2>调整<svg viewBox="0 0 14 14"><path d="M1 7l6-6 6 6M1 13l6-6 6 6"/></svg></h2>
    </div>
    <div class="scroll">
      <button aria-label="向上滚动"><svg viewBox="0 0 10 6"><path d="M0 6l5-6 5 6-5-2z"/></svg></button>
      <i class="thumb"></i>
      <button aria-label="向下滚动"><svg viewBox="0 0 10 6"><path d="M0 0l5 6 5-6-5 2z"/></svg></button>
    </div>
  </div>
  <div class="hint"></div>
</section>

<svg class="notes">
  <g>
    <text x="1826" y="386">文字大小</text>
    <text x="1754" y="553">文字样式</text>
    <text x="1677" y="752">文字旋转</text>
    <text x="1222" y="1251">效果自行测试</text>
    <path d="M1940 386L2122 444L2119 437L2133 453L2113 457L2118 451z"/>
    <path d="M1898 553L2103 630L2101 623L2114 639L2093 642L2099 637z"/>
    <path d="M1820 713L2114 779L2112 772L2127 786L2107 792L2112 786z"/>
  </g>
</svg>
</body>
</html>
```
FILE: styles.css
```css
* { box-sizing: border-box; }

body {
  margin: 0;
  min-height: 100vh;
  display: flex;
  flex-direction: column;
  position: relative;
  overflow: hidden;
  background: #efefef;
  color: #000;
  font: 18px/24px "Noto Sans CJK SC", sans-serif;
}

button, select, input {
  margin: 0;
  padding: 0;
  border: 0;
  border-radius: 0;
  background: none;
  font: inherit;
  color: inherit;
}

button {
  display: flex;
  align-items: center;
  justify-content: center;
}

i { display: block; flex: none; }
.defs { position: absolute; width: 0; height: 0; }

/* title and menu */
.titlebar {
  display: flex;
  align-items: center;
  height: 36px;
  padding-left: 3px;
  background: #fff;
  border-bottom: 1px solid #cfcfcf;
}
.logo { width: 22px; height: 22px; }
.titlebar h1 {
  margin: 0 0 2px 6px;
  font: 400 18px/24px "Open Sans", sans-serif;
  color: #888;
}
.winctl { display: flex; margin-left: auto; }
.winctl button { width: 70px; height: 34px; }
.winctl button:last-child { width: 69px; }
.winctl svg { width: 16px; height: 16px; fill: none; stroke: #888; }

.menubar {
  display: flex;
  align-items: center;
  gap: 22px;
  height: 26px;
  padding-left: 12px;
  background: #fff;
}
.docicon { width: 22px; height: 24px; margin-right: -11px; }
.menubar a { color: #707070; text-decoration: none; }
.docctl { display: flex; gap: 3px; margin-left: auto; align-self: stretch; padding-top: 1px; }
.docctl button { width: 26px; background: #e4e4e4; }
.docctl svg { width: 14px; height: 14px; fill: #9aa5b2; }

/* docked toolbars */
.dock { display: flex; flex-direction: column; gap: 2px; padding-top: 3px; }
.dockrow { display: flex; gap: 2px; height: 41px; }
.bar {
  display: flex;
  align-items: center;
  padding: 3px 5px 0 5px;
  border-top: 2px solid #fbfbfb;
  border-right: 1px solid #a0a0a0;
  border-bottom: 2px solid #a8a8a8;
}
.dockrow:first-child { height: 40px; }
.dockrow:first-child .bar { padding-top: 5px; }
.bar button { width: 34px; height: 32px; }
.bar button svg { width: 24px; height: 24px; }
.grip {
  width: 10px;
  height: 34px;
  margin-right: 4px;
  border: solid #b4b4b4;
  border-width: 0 1px;
  background: linear-gradient(90deg, #fff 0 3px, #b4b4b4 3px 4px, #efefef 4px 6px, #fff 6px);
}
.bar .drop { width: 20px; }
.drop::before { content: ""; border: solid transparent; border-width: 5px 5px 0; border-top-color: #00008b; }
.drop.off::before { border-top-color: #aab; }
.sep { width: 11px; height: 28px; background: linear-gradient(#8c8c8c, #8c8c8c) center / 1px 100% no-repeat; }

.combo {
  display: flex;
  align-items: center;
  position: relative;
  height: 33px;
  background: #fff;
  border: 2px solid #8a8a8a;
}
.combo select {
  flex: 1;
  min-width: 0;
  height: 100%;
  padding-left: 5px;
  appearance: none;
  font-feature-settings: "hwid";
}
.combo::after {
  content: "";
  position: absolute;
  right: 7px;
  top: 7px;
  width: 9px;
  height: 9px;
  border: solid #606060;
  border-width: 0 2px 2px 0;
  transform: rotate(45deg);
  pointer-events: none;
}
.combo.mono select { font: 15px/24px "Liberation Mono", monospace; padding-top: 3px; }
.w150 { width: 150px; }
.w180 { width: 180px; }
.w186 { width: 186px; }
.w225 { width: 225px; }
.w238 { width: 238px; }
.w263 { width: 263px; }
.w263 select { padding-left: 12px; }
.w450 { width: 450px; }
.combo.disabled { border-color: #ccc; }
.combo.disabled select { background: #efefef; color: #808080; margin: 2px 26px 2px 1px; height: auto; padding-left: 11px; opacity: 1; }
.combo.disabled::after { border-color: #bbb; }
.swatch { width: 15px; height: 15px; border: 2px solid #111; background: #fff; }
.combo .swatch { margin-left: 8px; margin-right: 2px; }
.layer { padding-left: 5px; gap: 1px; }
.layer svg { width: 24px; height: 24px; }
.layer .swatch { margin-left: 0; }
.rule { width: 52px; height: 2px; margin-left: 6px; background: #111; }
.rule.long { width: 90px; }
.rule + select { padding-left: 8px; }

/* drawing area */
.work {
  flex: 1;
  display: flex;
  min-height: 0;
}
.drawdock { width: 40px; flex: none; }
.drawbar {
  width: 37px;
  padding: 5px 0 15px;
  border: solid #a8a8a8;
  border-width: 0 2px 2px 1px;
}
.hgrip {
  height: 10px;
  margin: 0 2px 2px 4px;
  border: solid #b4b4b4;
  border-width: 1px 0;
  background: linear-gradient(#fff 0 3px, #b4b4b4 3px 4px, #efefef 4px 6px, #fff 6px);
}
.drawbar button { width: 34px; height: 33px; }
.drawbar svg { width: 24px; height: 24px; }
.view {
  flex: 1;
  display: flex;
  flex-direction: column;
  min-width: 0;
  position: relative;
  border-left: 1px solid #666;
  margin-right: 40px;
}
.view::before {
  content: "";
  height: 4px;
  margin-right: -40px;
  background: linear-gradient(#b0b0b0 0 1px, #dcdcdc 1px 2px, #777 2px);
}
.model { flex: 1; min-height: 0; background: #000; overflow: hidden; position: relative; }
.drawing { position: absolute; width: 100%; height: 100%; }
.edges { shape-rendering: crispEdges; }
.dim text, text.dim { font-family: Roboto, sans-serif; font-weight: 100; }
.dim.solid { fill: #fff; stroke: #fff; stroke-width: .5; }
.dashed { stroke-dasharray: 4 5; }
.lettering { fill: #fff; stroke: none; font-family: "Noto Sans CJK SC", sans-serif; }
.half { font-feature-settings: "hwid"; font-weight: 500; }
.heavy { font-weight: 700; }
.grips { fill: #0040ff; stroke: #555; stroke-width: 1; }
.ucs text { font: 100 42px Roboto, sans-serif; fill: #fff; stroke: #fff; stroke-width: .3; }

.tabs { display: flex; height: 24px; border-right: 2px solid #fff; }
.tabnav { display: flex; margin-right: 4px; }
.tabnav button { width: 27px; height: 21px; border: solid #aaa; border-width: 0 1px 1px 0; background: #f6f6f6; }
.tabnav svg { width: 14px; height: 14px; }
.tab { position: relative; width: 62px; height: 22px; }
.tab + .tab { margin-left: -2px; width: 64px; }
.tab svg { position: absolute; width: 100%; height: 100%; left: 0; top: 0; fill: #f4f4f4; stroke: #111; stroke-width: 2; }
.tab span { position: relative; line-height: 20px; font-feature-settings: "hwid"; }
.tab.current { color: #fff; z-index: 1; }
.tab.current svg { fill: #000; }

/* command window */
.command {
  display: flex;
  height: 93px;
  padding: 23px 0 0 10px;
  border-bottom: 2px solid #c4c4c4;
  background: linear-gradient(#fff 0 3px, #e8e8e8 3px 7px, #808080 7px 10px, #efefef 10px);
}
.command .grip { height: 61px; margin-right: 5px; }
.console {
  flex: 1;
  height: 66px;
  background: #fff;
  border: solid #757575;
  border-width: 3px 0 0 2px;
  font: 20px/24px "Liberation Mono", monospace;
}
.console p, .console label { display: flex; margin: 0; padding-left: 2px; height: 34px; line-height: 27px; white-space: pre; }
.console label { height: 29px; border-top: 2px solid #a8a8a8; }
.console span { font: 22px/24px "Noto Sans CJK SC", sans-serif; }
.console input { flex: 1; outline: 0; }

/* status bar */
.status {
  display: flex;
  align-items: flex-end;
  height: 33px;
  padding: 0 4px 0 7px;
  font-feature-settings: "hwid";
}
.coords { width: 235px; height: 27px; margin-bottom: 1px; padding-left: 2px; border: 2px solid #b4b4b4; border-right-color: #ccc; line-height: 26px; }
.toggles { display: flex; gap: 6px; margin-left: 6px; }
.toggles button {
  height: 27px;
  padding: 3px 1px 0;
  border: 2px solid #fafafa;
  border-right-color: #b0b0b0;
  border-bottom: 0;
  font-feature-settings: "hwid";
}
.toggles .on { border-color: #111 #f8f8f8 #111 #111; }
.tray { display: flex; gap: 4px; margin-left: auto; width: 66px; height: 27px; padding: 1px 6px; border: solid #b0b0b0; border-width: 2px 0 0 2px; }
.tray svg { width: 24px; height: 24px; flex: none; }
.status .drop { width: 28px; height: 18px; }
.status .drop::before { border-width: 6px 6px 0; border-top-color: #000; }
.clean { width: 24px; height: 24px; margin: 0 0 3px 5px; border: 2px solid #2d608f; background: linear-gradient(135deg, #d6e6f5, #8fb4d8); box-shadow: inset 0 0 0 2px #a8c8e6, inset 0 0 0 3px #4d7fae; }

.taskbar { display: flex; gap: 4px; height: 12px; padding-left: 117px; background: #1e1f1f; }
.task { width: 53px; background: #444; border: 1px solid #777; border-bottom: 0; }
.task.active { background: #6a6a6a; border-color: #ddd; }
.task:nth-child(2) { background: radial-gradient(circle at 50% 18px, #4fc3c8 9px, #444 10px); }
.task:nth-child(3) { background: linear-gradient(#fff, #fff) 50% 9px / 24px 4px no-repeat #444; }

/* properties palette */
.palette {
  position: absolute;
  top: 63px;
  right: 0;
  width: 477px;
  padding: 14px 4px 10px 0;
  background: #ebebeb;
  border: solid #f3f7fc;
  border-width: 11px 0 11px 10px;
  box-shadow: inset -4px 0 #c2d0df;
  clip-path: polygon(0 0, 100% 0, 100% 100%, 20px 100%, 0 calc(100% - 20px));
}
.palette::after {
  content: "";
  position: absolute;
  left: -10px;
  right: 0;
  bottom: -11px;
  height: 2px;
  background: #8a8a8a;
}
.palhead { display: flex; align-items: flex-end; gap: 7px; padding-left: 13px; height: 38px; }
.palhead .combo { width: 318px; height: 36px; }
.palhead .combo::after { top: 8px; right: 8px; }
.palbtns { display: flex; height: 38px; border: 2px solid #c4c4c4; }
.palbtns button { width: 36px; border-right: 1px solid #c4c4c4; }
.palbtns svg { width: 25px; height: 25px; }
.palbody { display: flex; gap: 12px; margin-top: 21px; padding: 0 2px 0 16px; }
.groups { flex: 1; }
.props {
  width: calc(100% - 24px);
  margin-left: 24px;
  border-collapse: collapse;
  table-layout: fixed;
  font-feature-settings: "hwid";
}
.props.first { height: 114px; margin-bottom: 17px; }
.props.second { height: 563px; margin-bottom: 16px; }
.props th, .props td { padding: 0; border: 1px solid #bdbdbd; text-align: left; font-weight: 400; }
.props th { width: 166px; padding: 1px 0 0 6px; vertical-align: top; }
.props td { padding: 0 0 3px 3px; line-height: 24px; background: #fff; }
.props td.ro { background: #ebebeb; }
.props .swatch { display: inline-block; vertical-align: -1px; margin-right: 10px; }
.groups h2 {
  display: flex;
  justify-content: space-between;
  height: 38px;
  margin: 0;
  padding: 5px 13px 0 10px;
  background: #bfbfbf;
  font-size: 18px;
  line-height: 24px;
  clip-path: polygon(6px 0, calc(100% - 6px) 0, 100% 6px, 100% 100%, 0 100%, 0 6px);
}
.groups h2 svg { width: 14px; height: 14px; margin-top: 3px; fill: none; stroke: #fff; stroke-width: 2; }
.scroll { display: flex; flex-direction: column; width: 15px; background: #fff; }
.scroll button { height: 15px; background: #c6c6c6; }
.scroll svg { width: 11px; height: 7px; }
.thumb { height: 161px; margin: 225px 0 auto; background: #bfbfbf; }
.hint { height: 72px; margin: 11px 26px 0 18px; border: 2px solid #c8c8c8; }

/* callouts over the window */
.notes { position: absolute; left: 0; top: 0; width: 100%; height: 100%; pointer-events: none; fill: #ff2010; }
.notes text { font-size: 32px; }
```
